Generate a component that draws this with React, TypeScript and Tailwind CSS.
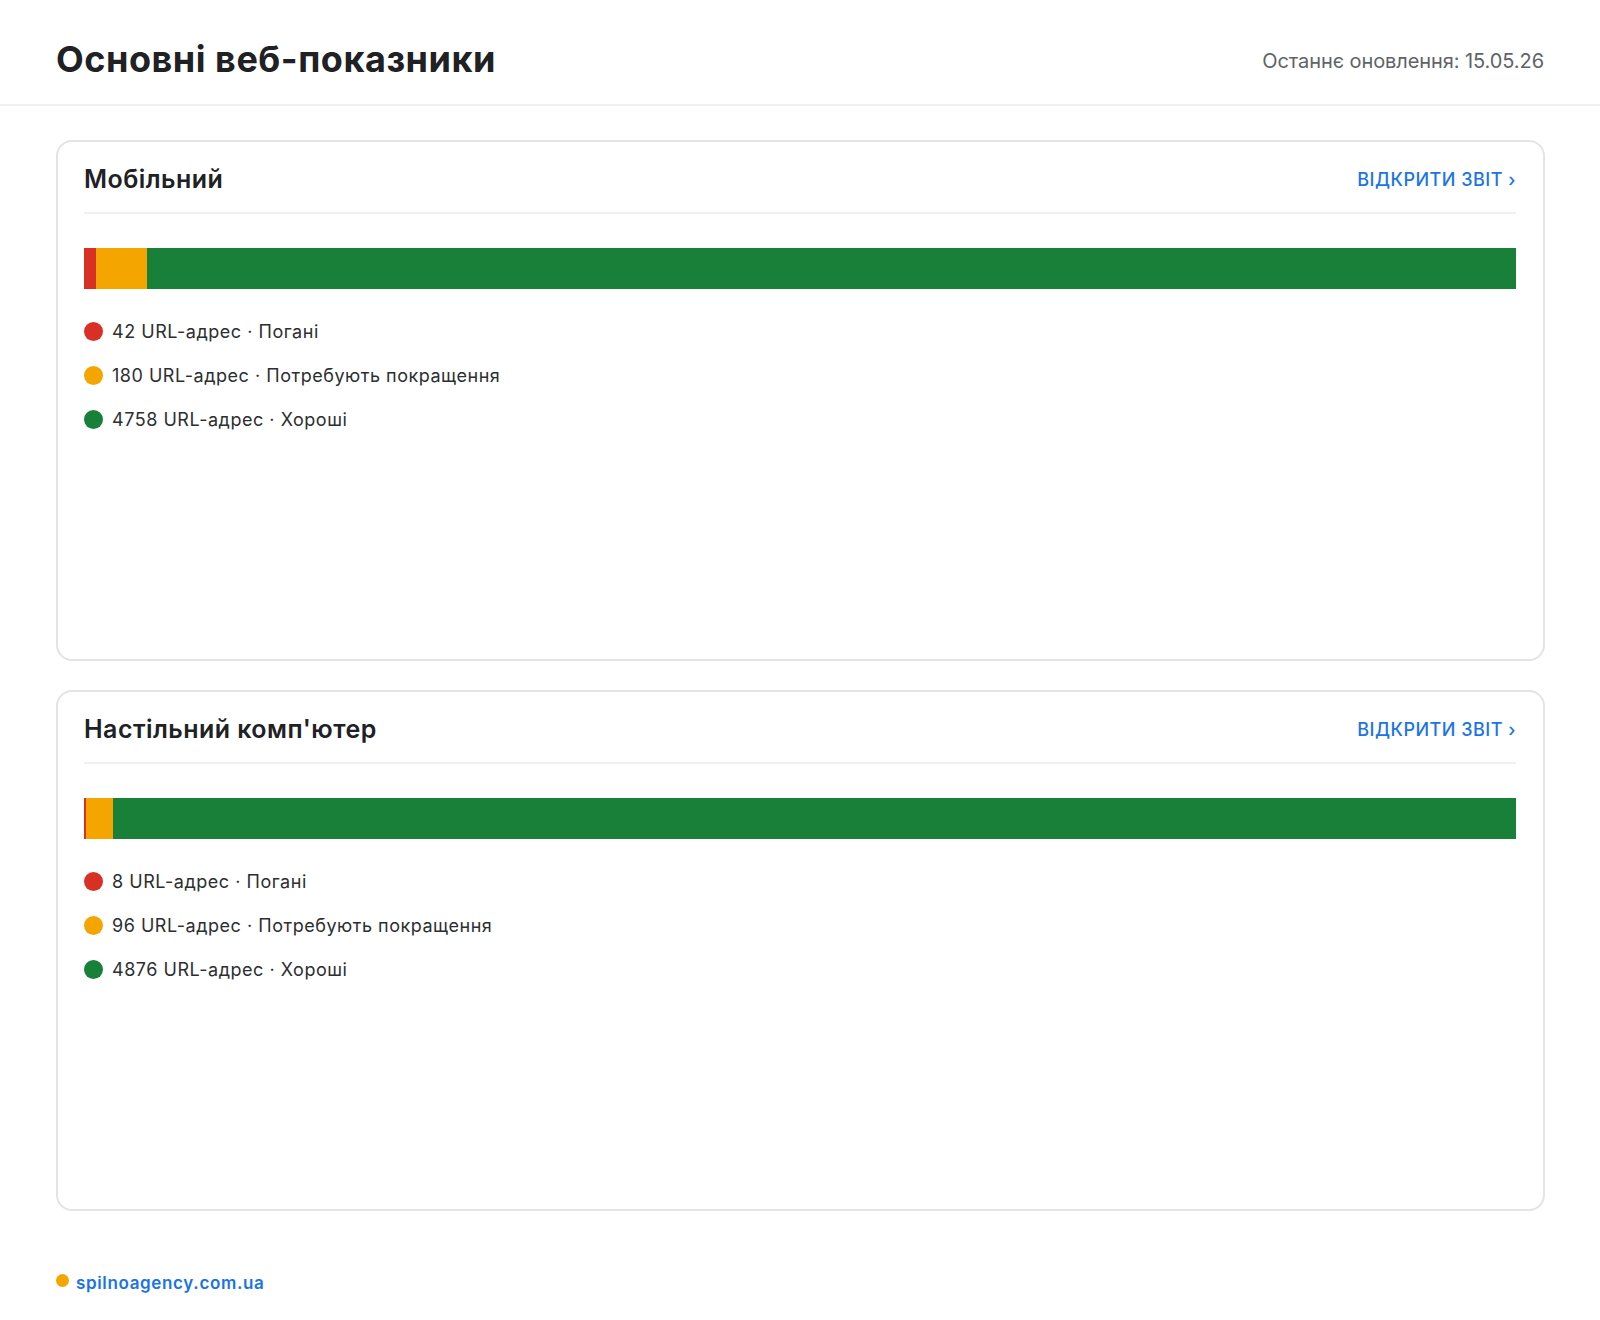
const font = { fontFamily: "Inter, 'Noto Sans', sans-serif" };

type Row = { count: number; label: string; dot: string };

const COLORS = { poor: "bg-[#d93025]", needs: "bg-[#f5a500]", good: "bg-[#188038]" };
const BAR_WIDTH = 1432;

function Card({ title, poor, needs, good }: { title: string; poor: number; needs: number; good: number }) {
  const total = poor + needs + good;
  const rows: Row[] = [
    { count: poor, label: "Погані", dot: COLORS.poor },
    { count: needs, label: "Потребують покращення", dot: COLORS.needs },
    { count: good, label: "Хороші", dot: COLORS.good },
  ];

  return (
    <section className="h-[521px] rounded-[16px] border-2 border-[#e3e3e8] pl-[26px] pr-[27px]">
      <div className="flex h-[72px] items-center justify-between border-b-2 border-[#f0f0f4] pt-[2px]">
        <h2 className="mt-[4px] text-[25px] font-semibold tracking-[0.45px] text-[#202124]">{title}</h2>
        <a className="mt-[2px] text-[18px] font-medium tracking-[0.5px] text-[#1a73e8]">ВІДКРИТИ ЗВІТ ›</a>
      </div>
      <div className="mt-[34px] flex h-[41px] w-full">
        <div className={COLORS.poor} style={{ width: Math.floor((poor / total) * BAR_WIDTH) }} />
        <div className={COLORS.needs} style={{ width: Math.floor((needs / total) * BAR_WIDTH) }} />
        <div className={`flex-1 ${COLORS.good}`} />
      </div>
      <ul className="mt-[27px] flex flex-col gap-[14px]">
        {rows.map((r) => (
          <li key={r.label} className="flex h-[30px] items-center gap-[9px] text-[18px] tracking-[0.52px] text-[#2d2e31]">
            <span className={`h-[19px] w-[19px] rounded-full ${r.dot}`} />
            <span>
              {r.count} URL-адрес · {r.label}
            </span>
          </li>
        ))}
      </ul>
    </section>
  );
}

export default function App() {
  return (
    <div className="min-h-[1320px] bg-white" style={font}>
      <header className="flex h-[106px] items-center justify-between border-b-2 border-[#f0f0f4] px-[56px] pt-[14px]">
        <h1 className="text-[36px] font-bold leading-none tracking-[0.53px] text-[#202124]">Основні веб-показники</h1>
        <span className="mt-[4px] text-[20px] tracking-[-0.08px] text-[#5f6368]">Останнє оновлення: 15.05.26</span>
      </header>
      <main className="flex flex-col gap-[29px] pl-[56px] pr-[55px] pt-[34px]">
        <Card title="Мобільний" poor={42} needs={180} good={4758} />
        <Card title="Настільний комп'ютер" poor={8} needs={96} good={4876} />
      </main>
      <footer className="mt-[60px] flex items-center gap-[7px] px-[56px]">
        <span className="mb-[6px] h-[13px] w-[13px] rounded-full bg-[#f5a500]" />
        <a className="text-[17px] font-semibold tracking-[0.65px] text-[#1a73e8]">spilnoagency.com.ua</a>
      </footer>
    </div>
  );
}
